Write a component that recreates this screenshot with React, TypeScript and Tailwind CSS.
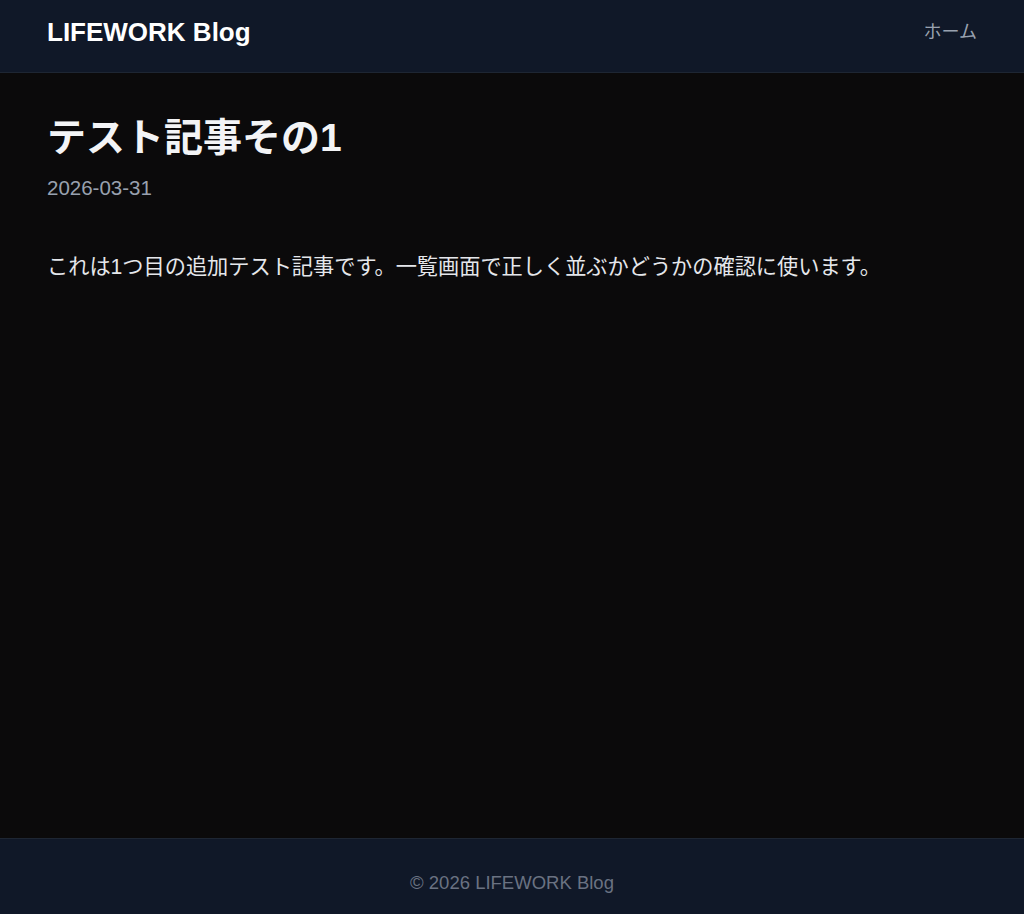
export default function App() {
  return (
    <div
      className="flex min-h-screen flex-col bg-[#0b0a0b] text-gray-100"
      style={{ fontFamily: '"Liberation Sans", Arial, "Noto Sans CJK JP", sans-serif' }}
    >
      <header className="border-b border-[#1e2633] bg-[#101828]">
        <div className="flex h-[72px] items-center justify-between px-[47px] pb-2">
          <a href="#" className="text-[26px] leading-8 font-bold text-white">
            LIFEWORK Blog
          </a>
          <nav>
            <a href="#" className="text-[18px] leading-6 text-gray-400">
              ホーム
            </a>
          </nav>
        </div>
      </header>

      <main className="flex-1 px-[47px] pt-[41px]">
        <article>
          <h1 className="text-[39px] leading-[48px] font-bold text-gray-100">テスト記事その1</h1>
          <p className="mt-3 text-[20.5px] leading-7 text-gray-400">2026-03-31</p>
          <div className="mt-[49px] text-[21.2px] leading-8 text-gray-200">
            <p>これは1つ目の追加テスト記事です。一覧画面で正しく並ぶかどうかの確認に使います。</p>
          </div>
        </article>
      </main>

      <footer className="border-t border-[#1e2633] bg-[#101828] pt-[30px] pb-[17px] text-center">
        <p className="text-[18.5px] leading-7 text-gray-500">© 2026 LIFEWORK Blog</p>
      </footer>
    </div>
  )
}
